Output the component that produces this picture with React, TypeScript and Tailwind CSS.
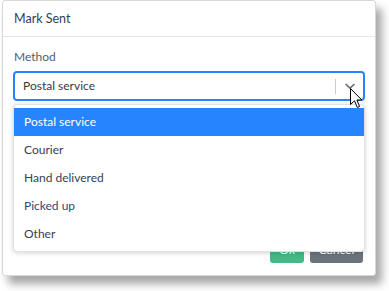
import React from "react";

const options = ["Postal service", "Courier", "Hand delivered", "Picked up", "Other"];

export default function App() {
  return (
    <div className="w-[389px] h-[291px] bg-white overflow-hidden relative" style={{ fontFamily: 'Lato, "Noto Sans", sans-serif' }}>
      <div className="ml-[2px] w-[374px] h-[276px] bg-white border border-[#d4d7dc] rounded-[3px] flex flex-col shadow-[6px_8px_8px_rgba(0,0,0,0.35)]">
        <div className="h-[36px] border-b border-[#e3e6ea] flex items-center px-[11px] pt-[2px] text-[12.5px] text-[#2f4256]">
          Mark Sent
        </div>
        <div className="px-[10px] pt-[11px]">
          <div className="text-[12px] text-[#4d6177] leading-[18px] mb-[5px] pl-[1px]">Method</div>
          <div className="relative">
            <div className="h-[30px] rounded-[4px] border-2 border-[#2684ff] flex items-center">
              <div className="flex-1 pl-[8px] text-[12px] text-[#333b44]">Postal service</div>
              <div className="w-px h-[15px] bg-[#cccccc]"></div>
              <div className="w-[27px] flex justify-center">
                <svg width="12" height="8" viewBox="0 0 12 8">
                  <path d="M1.5 2 L6 6.2 L10.5 2" fill="none" stroke="#6b6b6b" strokeWidth="1.6" />
                </svg>
              </div>
            </div>
            <div className="absolute left-0 right-0 top-[33px] bg-white rounded-[4px] border border-[#e2e2e2] shadow-[0_1px_5px_rgba(0,0,0,0.18)] py-[3px] z-10">
              {options.map((o, i) => (
                <div
                  key={o}
                  className={
                    i === 0
                      ? "h-[28px] flex items-center px-[10px] text-[12px] bg-[#2684ff] text-white"
                      : i === 3
                      ? "h-[28px] flex items-center px-[10px] text-[12px] text-[#2a4a75]"
                      : "h-[28px] flex items-center px-[10px] text-[12px] text-[#36424f]"
                  }
                >
                  {o}
                </div>
              ))}
            </div>
          </div>
        </div>
        <div className="mt-auto flex justify-end gap-[6px] px-[12px] pb-[12px]">
          <button className="w-[34px] h-[26px] rounded-[3px] bg-[#45b984] text-white text-[12px]">Ok</button>
          <button className="w-[53px] h-[26px] rounded-[3px] bg-[#6b737d] text-white text-[12px]">Cancel</button>
        </div>
      </div>
      <svg className="absolute left-[350px] top-[88px] z-20" width="14" height="22" viewBox="0 0 14 22">
        <path d="M0.5 0.5 L0.5 16.5 L4.5 12.8 L7.3 19.5 L9.6 18.5 L6.9 12 L11.8 12 Z" fill="white" stroke="black" strokeWidth="1" strokeLinejoin="round" />
      </svg>
    </div>
  );
}
